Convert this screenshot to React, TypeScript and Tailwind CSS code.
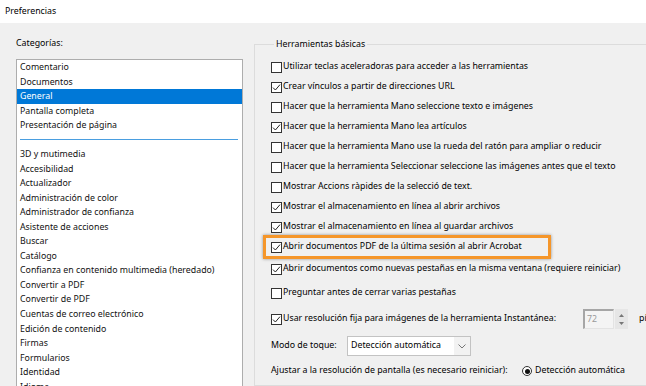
import React from "react";

const topItems = ["Comentario", "Documentos", "General", "Pantalla completa", "Presentación de página"];

const moreItems = [
  "3D y mutimedia",
  "Accesibilidad",
  "Actualizador",
  "Administración de color",
  "Administrador de confianza",
  "Asistente de acciones",
  "Buscar",
  "Catálogo",
  "Confianza en contenido multimedia (heredado)",
  "Convertir a PDF",
  "Convertir de PDF",
  "Cuentas de correo electrónico",
  "Edición de contenido",
  "Firmas",
  "Formularios",
  "Identidad",
  "Idioma",
];

const options = [
  { label: "Utilizar teclas aceleradoras para acceder a las herramientas", checked: false },
  { label: "Crear vínculos a partir de direcciones URL", checked: true },
  { label: "Hacer que la herramienta Mano seleccione texto e imágenes", checked: false },
  { label: "Hacer que la herramienta Mano lea artículos", checked: true },
  { label: "Hacer que la herramienta Mano use la rueda del ratón para ampliar o reducir", checked: false },
  { label: "Hacer que la herramienta Seleccionar seleccione las imágenes antes que el texto", checked: false },
  { label: "Mostrar Accions ràpides de la selecció de text.", checked: false },
  { label: "Mostrar el almacenamiento en línea al abrir archivos", checked: true },
  { label: "Mostrar el almacenamiento en línea al guardar archivos", checked: true },
];

function Checkbox({ checked }: { checked: boolean }) {
  return (
    <span className="w-[11px] h-[11px] border border-[#333] bg-white flex-shrink-0 flex items-center justify-center mr-[1px]">
      {checked && (
        <svg width="9" height="9" viewBox="0 0 9 9">
          <path d="M1 4.6 L3.4 7 L8 1.6" fill="none" stroke="#222" strokeWidth="1" />
        </svg>
      )}
    </span>
  );
}

function Row({ label, checked }: { label: string; checked: boolean }) {
  return (
    <div className="h-[20px] flex items-center whitespace-nowrap">
      <Checkbox checked={checked} />
      <span>{label}</span>
    </div>
  );
}

export default function App() {
  return (
    <div className="w-[646px] h-[386px] overflow-hidden bg-[#f0f0f0] text-black font-['Noto_Sans',sans-serif] text-[8.8px] flex flex-col">
      {/* Title */}
      <div className="h-[23px] bg-white flex items-center pl-[5px] flex-shrink-0">Preferencias</div>

      <div className="flex flex-1 min-h-0">
        {/* Categories */}
        <div className="pl-[16px] pt-[13px] w-[243px] flex-shrink-0 flex flex-col">
          <div className="h-[14px] leading-[14px]">Categorías:</div>
          <div className="mt-[9px] h-[400px] border border-[#adadad] bg-white text-[#111]">
            {topItems.map((item) => (
              <div
                key={item}
                className={
                  item === "General"
                    ? "h-[14.6px] leading-[14.6px] pl-[3px] bg-[#0078d7] text-white whitespace-nowrap"
                    : "h-[14.6px] leading-[14.6px] pl-[3px] whitespace-nowrap"
                }
              >
                {item}
              </div>
            ))}
            <div className="h-[14px] flex items-center pl-[3px] pr-[4px]">
              <div className="h-px w-full bg-[#4a9ee0]" />
            </div>
            {moreItems.map((item) => (
              <div key={item} className="h-[14.55px] leading-[14.55px] pl-[3px] whitespace-nowrap">
                {item}
              </div>
            ))}
          </div>
        </div>

        {/* Settings group */}
        <fieldset className="ml-[11px] mt-[14px] -mr-[30px] flex-1 border border-[#dcdcdc] pl-[16px] pt-[6px] pb-[30px]">
          <legend className="ml-[3px] px-[2px] leading-[14px]">Herramientas básicas</legend>
          {options.map((o) => (
            <Row key={o.label} label={o.label} checked={o.checked} />
          ))}
          <div className="relative">
            <span className="absolute -left-[8px] -top-[2px] w-[288px] h-[24px] border-[3px] border-[#f5962a] shadow-[0_0_3px_rgba(0,0,0,0.4)]" />
            <Row label="Abrir documentos PDF de la última sesión al abrir Acrobat" checked />
          </div>
          <div className="mt-[2px]">
            <Row label="Abrir documentos como nuevas pestañas en la misma ventana (requiere reiniciar)" checked />
          </div>
          <div className="mt-[4px]">
            <Row label="Preguntar antes de cerrar varias pestañas" checked={false} />
          </div>

          <div className="mt-[6px] h-[20px] flex items-center whitespace-nowrap">
            <Checkbox checked />
            <span className="w-[300px] flex-shrink-0">
              Usar resolución fija para imágenes de la herramienta Instantánea:
            </span>
            <div className="w-[31px] h-[20px] flex items-center pl-[2px] text-[#9a9a9a] bg-[#f4f4f4] border-t-2 border-l-2 border-t-[#a6a6a6] border-l-[#a6a6a6] border-r border-b border-r-[#e3e3e3] border-b-[#e3e3e3]">
              72
            </div>
            <div className="ml-[1px] w-[13px] h-[20px] bg-[#e6e6e6] flex flex-col items-center justify-around py-[2px]">
              <svg width="5" height="3" viewBox="0 0 5 3">
                <path d="M0 3 L2.5 0 L5 3 Z" fill="#777" />
              </svg>
              <svg width="5" height="3" viewBox="0 0 5 3">
                <path d="M0 0 L2.5 3 L5 0 Z" fill="#777" />
              </svg>
            </div>
            <span className="ml-[11px]">píxeles</span>
          </div>

          <div className="mt-[7px] h-[20px] flex items-center whitespace-nowrap">
            <span className="w-[76px] flex-shrink-0">Modo de toque:</span>
            <div className="w-[124px] h-[20px] flex border border-[#c3c3c3] bg-white">
              <span className="flex-1 pl-[3px] flex items-center">Detección automática</span>
              <span className="w-[16px] bg-[#f2f2f2] flex items-center justify-center">
                <svg width="8" height="5" viewBox="0 0 8 5">
                  <path d="M0.5 0.5 L4 4 L7.5 0.5" fill="none" stroke="#777" strokeWidth="1" />
                </svg>
              </span>
            </div>
          </div>

          <div className="mt-[5px] h-[20px] flex items-center whitespace-nowrap">
            <span className="w-[251px] flex-shrink-0">
              Ajustar a la resolución de pantalla (es necesario reiniciar):
            </span>
            <span className="w-[10px] h-[10px] rounded-full border border-[#333] bg-white flex items-center justify-center mr-[3px]">
              <span className="w-[5px] h-[5px] rounded-full bg-[#111]" />
            </span>
            <span>Detección automática</span>
          </div>
        </fieldset>
      </div>
    </div>
  );
}
